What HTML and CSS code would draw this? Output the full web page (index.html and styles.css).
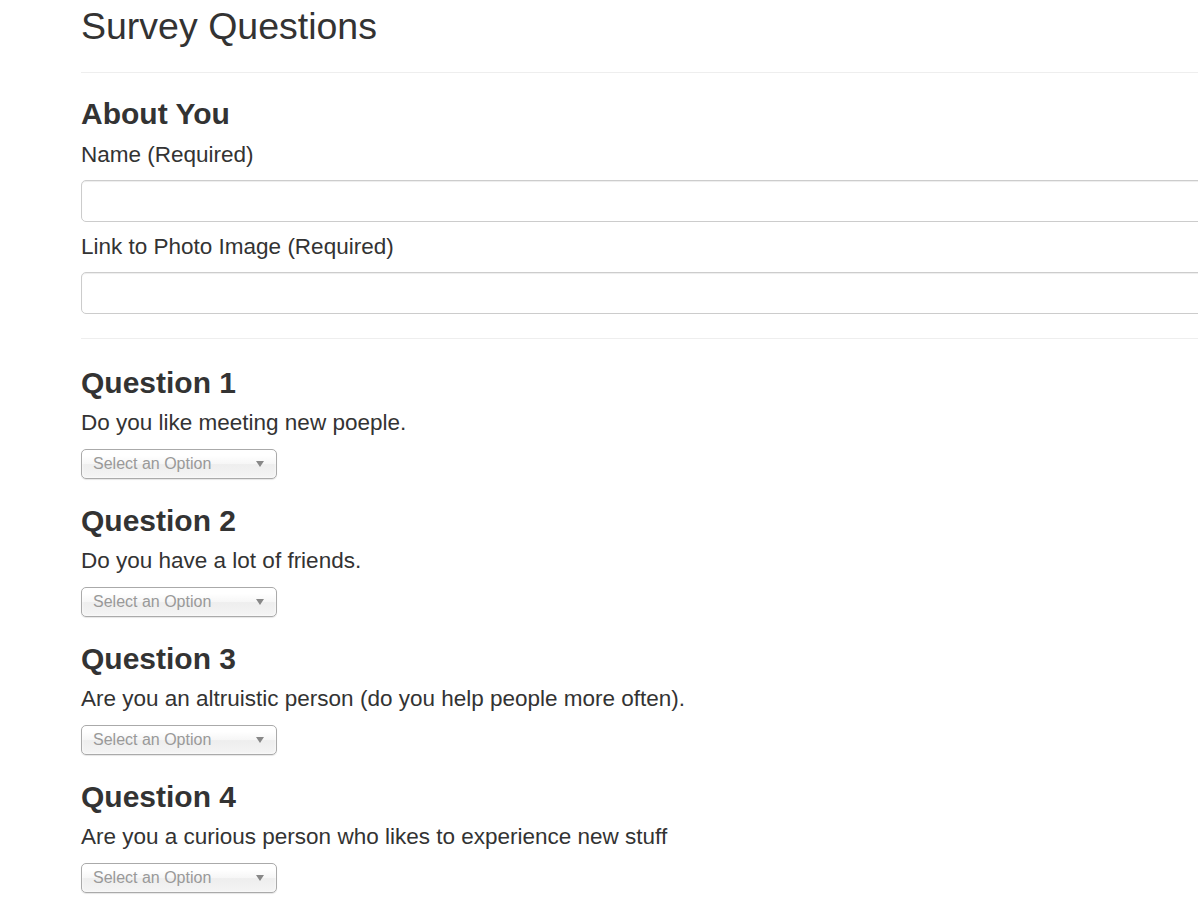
FILE: index.html
```html
<!DOCTYPE html>
<html lang="en">
<head>
<meta charset="utf-8">
<title>Survey Questions</title>
<link rel="stylesheet" href="styles.css">
</head>
<body>
<div class="page">
  <h1 class="title">Survey Questions</h1>
  <hr class="rule">
  <section class="about">
    <h3 class="heading">About You</h3>
    <label class="label">Name (Required)</label>
    <input class="field" type="text">
    <label class="label label-next">Link to Photo Image (Required)</label>
    <input class="field" type="text">
  </section>
  <hr class="rule rule-after">
  <section class="question">
    <h3 class="heading">Question 1</h3>
    <p class="prompt">Do you like meeting new poeple.</p>
    <div class="chosen"><span class="chosen-text">Select an Option</span><span class="chosen-arrow"></span></div>
  </section>
  <section class="question">
    <h3 class="heading">Question 2</h3>
    <p class="prompt">Do you have a lot of friends.</p>
    <div class="chosen"><span class="chosen-text">Select an Option</span><span class="chosen-arrow"></span></div>
  </section>
  <section class="question">
    <h3 class="heading">Question 3</h3>
    <p class="prompt">Are you an altruistic person (do you help people more often).</p>
    <div class="chosen"><span class="chosen-text">Select an Option</span><span class="chosen-arrow"></span></div>
  </section>
  <section class="question">
    <h3 class="heading">Question 4</h3>
    <p class="prompt">Are you a curious person who likes to experience new stuff</p>
    <div class="chosen"><span class="chosen-text">Select an Option</span><span class="chosen-arrow"></span></div>
  </section>
</div>
</body>
</html>
```

FILE: styles.css
```css
html, body {
  margin: 0;
  padding: 0;
  background: #fff;
  overflow: hidden;
}
body {
  font-family: "Liberation Sans", Arial, sans-serif;
  color: #333;
}
.page {
  width: 1300px;
  padding-left: 81px;
}
.title {
  font-size: 37.5px;
  font-weight: normal;
  line-height: 44px;
  margin: 4px 0 0 0;
}
.rule {
  border: 0;
  border-top: 1px solid #eee;
  margin: 24px 0 23px 0;
}
.rule-after {
  margin-top: 24px;
  margin-bottom: 26px;
}
.about {
  display: flex;
  flex-direction: column;
}
.heading {
  font-size: 30px;
  font-weight: bold;
  line-height: 36px;
  margin: 0;
}
.label {
  font-size: 22.5px;
  line-height: 32px;
  margin: 7px 0 9px 0;
}
.label-next {
  margin-top: 9px;
}
.field {
  display: block;
  box-sizing: border-box;
  width: 100%;
  height: 42px;
  margin: 0;
  border: 1px solid #ccc;
  border-radius: 5px;
  box-shadow: inset 0 1px 1px rgba(0,0,0,.075);
  background: #fff;
}
.question {
  display: flex;
  flex-direction: column;
  align-items: flex-start;
  padding-bottom: 24px;
}
.prompt {
  font-size: 22.5px;
  line-height: 32px;
  margin: 6px 0 10px 0;
}
.chosen {
  box-sizing: border-box;
  width: 196px;
  height: 30px;
  display: flex;
  align-items: center;
  justify-content: space-between;
  padding: 0 12px 0 11px;
  border: 1px solid #aaa;
  border-radius: 5px;
  background: linear-gradient(#fff 20%, #f6f6f6 50%, #eee 52%, #f4f4f4 100%);
  box-shadow: inset 0 0 3px #fff, 0 1px 1px rgba(0,0,0,.1);
}
.chosen-text {
  font-size: 16px;
  color: #999;
}
.chosen-arrow {
  width: 0;
  height: 0;
  border-left: 4px solid transparent;
  border-right: 4px solid transparent;
  border-top: 6px solid #888;
}
```
